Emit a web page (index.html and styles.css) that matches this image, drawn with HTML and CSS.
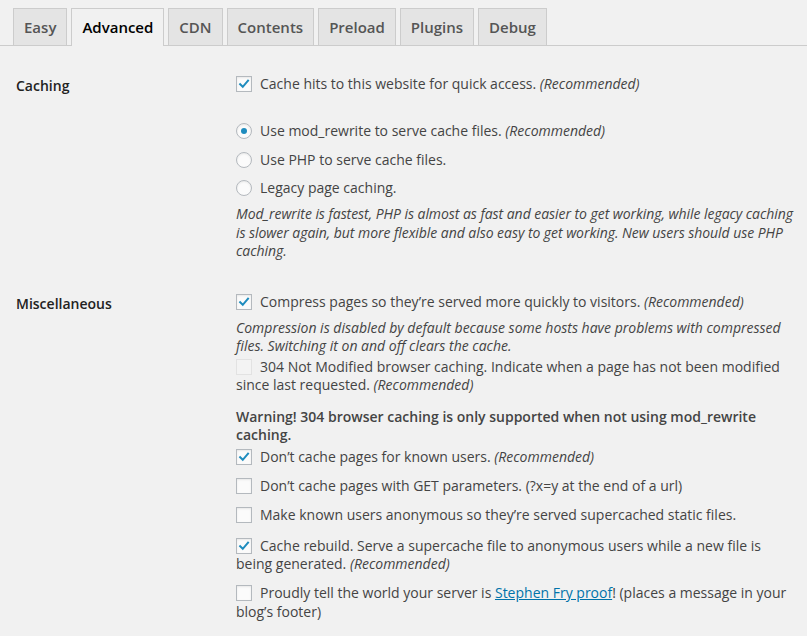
FILE: index.html
```html
<!DOCTYPE html>
<html lang="en">
<head>
<meta charset="utf-8">
<title>WP Super Cache – Advanced</title>
<link rel="stylesheet" href="styles.css">
</head>
<body>
<nav class="tabs">
  <a class="tab">Easy</a>
  <a class="tab active">Advanced</a>
  <a class="tab">CDN</a>
  <a class="tab">Contents</a>
  <a class="tab">Preload</a>
  <a class="tab">Plugins</a>
  <a class="tab">Debug</a>
</nav>

<div class="form">
  <div class="row">
    <div class="th">Caching</div>
    <div class="td">
      <div class="opt"><span class="cb on"><svg viewBox="0 0 16 16"><path d="M3.6 8.2 L6.6 11.2 L12.6 4.2"/></svg></span>Cache hits to this website for quick access. <em>(Recommended)</em></div>
      <div class="opt radio first"><span class="rd on"></span>Use mod_rewrite to serve cache files. <em>(Recommended)</em></div>
      <div class="opt radio"><span class="rd"></span>Use PHP to serve cache files.</div>
      <div class="opt radio"><span class="rd"></span>Legacy page caching.</div>
      <p class="desc tight">Mod_rewrite is fastest, PHP is almost as fast and easier to get working, while legacy caching<br>is slower again, but more flexible and also easy to get working. New users should use PHP caching.</p>
    </div>
  </div>

  <div class="row">
    <div class="th">Miscellaneous</div>
    <div class="td">
      <div class="opt"><span class="cb on"><svg viewBox="0 0 16 16"><path d="M3.6 8.2 L6.6 11.2 L12.6 4.2"/></svg></span>Compress pages so they’re served more quickly to visitors. <em>(Recommended)</em></div>
      <p class="desc">Compression is disabled by default because some hosts have problems with compressed files. Switching it on and off clears the cache.</p>
      <div class="opt m304"><span class="cb off"></span>304 Not Modified browser caching. Indicate when a page has not been modified since last requested. <em>(Recommended)</em></div>
      <p class="warn">Warning! 304 browser caching is only supported when not using mod_rewrite caching.</p>
      <div class="opt known"><span class="cb on"><svg viewBox="0 0 16 16"><path d="M3.6 8.2 L6.6 11.2 L12.6 4.2"/></svg></span>Don’t cache pages for known users. <em>(Recommended)</em></div>
      <div class="opt gap"><span class="cb"></span>Don’t cache pages with GET parameters. (?x=y at the end of a url)</div>
      <div class="opt gap"><span class="cb"></span>Make known users anonymous so they’re served supercached static files.</div>
      <div class="opt rebuild"><span class="cb on"><svg viewBox="0 0 16 16"><path d="M3.6 8.2 L6.6 11.2 L12.6 4.2"/></svg></span>Cache rebuild. Serve a supercache file to anonymous users while a new file is being generated. <em>(Recommended)</em></div>
      <div class="opt gap"><span class="cb"></span>Proudly tell the world your server is <a class="link" href="#">Stephen Fry proof</a>! (places a message in your blog’s footer)</div>
    </div>
  </div>
</div>
</body>
</html>
```

FILE: styles.css
```css
html, body {
  margin: 0;
  padding: 0;
  background: #f1f1f1;
}

body {
  font-family: "Open Sans", "Noto Sans", sans-serif;
  font-size: 14px;
  line-height: 18.5px;
  color: #444;
}

.tabs {
  display: flex;
  padding: 8px 0 0 13px;
  border-bottom: 1px solid #ccc;
  height: 37px;
}

.tab {
  display: block;
  box-sizing: border-box;
  height: 37px;
  padding: 0 10px;
  margin-right: 4px;
  border: 1px solid #ccc;
  border-bottom: none;
  background: #e4e4e4;
  color: #555;
  font-size: 15px;
  font-weight: 600;
  line-height: 36px;
  text-decoration: none;
}

.tab.active {
  background: #f1f1f1;
  color: #000;
  height: 38px;
}

.form {
  margin-top: 10.75px;
}

.row {
  display: grid;
  grid-template-columns: 210px 1fr;
  padding-left: 16px;
}

.th {
  padding: 20px 10px 20px 0;
  font-weight: 600;
  color: #222;
}

.td {
  padding: 18px 10px 14px 10px;
}

.opt {
  margin: 0;
}

.cb, .rd {
  display: inline-block;
  box-sizing: border-box;
  width: 16px;
  height: 16px;
  margin: 1.25px 8px 0 0;
  vertical-align: top;
  border: 1px solid #b4b9be;
  background: #fbfbfb;
  box-shadow: inset 0 1px 2px rgba(0, 0, 0, 0.08);
  position: relative;
}

.cb svg {
  display: block;
  width: 14px;
  height: 14px;
}

.cb svg path {
  fill: none;
  stroke: #1e8cbe;
  stroke-width: 2.3;
  stroke-linecap: square;
}

.cb.off {
  border-color: #e2e2e2;
  background: #f3f3f3;
  box-shadow: none;
}

.rd {
  border-radius: 50%;
}

.rd.on::before {
  content: "";
  position: absolute;
  left: 4px;
  top: 4px;
  width: 6px;
  height: 6px;
  border-radius: 50%;
  background: #1e8cbe;
}

.radio {
  margin-top: 10px;
}

.radio.first {
  margin-top: 28.75px;
}

.desc {
  margin: 7.5px 0 0;
  font-style: italic;
}

.desc.tight {
  letter-spacing: -0.05px;
}

.m304 {
  margin-top: 2px;
}

.warn {
  margin: 13px 0 0;
  font-weight: 600;
}

.known {
  margin-top: 3px;
}

.gap {
  margin-top: 10.5px;
}

.rebuild {
  margin-top: 12.5px;
}

.link {
  color: #0073aa;
  text-decoration: underline;
}
```
